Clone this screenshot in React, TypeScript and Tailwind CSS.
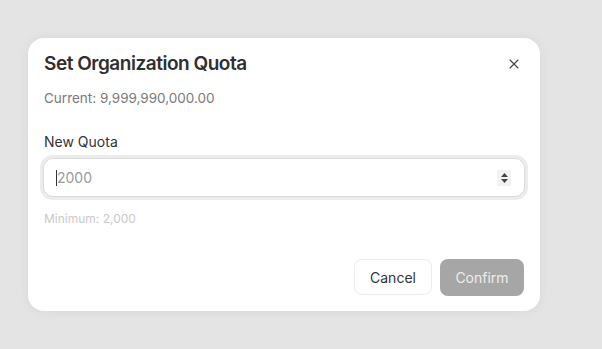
import { X } from 'lucide-react'

function App() {
  return (
    <main
      className="min-h-screen w-full bg-[#e4e4e4] pt-[38px] pl-[28px]"
      style={{ fontFamily: 'Inter, "Noto Sans", sans-serif' }}
    >
      <div className="w-[512px] h-[273px] rounded-[16px] bg-white shadow-[0_0_12px_rgba(0,0,0,0.06)] px-4 pt-[12px] flex flex-col">
        <div className="flex items-center justify-between h-[28px]">
          <h2 className="text-[19px] font-semibold tracking-[-0.025em] text-[#2f2f2f]">Set Organization Quota</h2>
          <button type="button" className="mr-[2px] text-[#444]">
            <X size={16} strokeWidth={1.6} />
          </button>
        </div>
        <p className="mt-[10px] text-[13.5px] leading-5 text-[#7a7a7a]">Current: 9,999,990,000.00</p>
        <label className="mt-[24px] text-[14px] leading-5 text-[#333]">New Quota</label>
        <div className="mt-[6px] -mx-[1px] h-[39px] rounded-[10px] border border-[#d9d9d9] ring-[3px] ring-[#ececec] flex items-center pl-[12px] pr-[13px]">
          <span className="w-px h-[16px] bg-[#333]" />
          <span className="text-[14px] text-[#9a9a9a]">2000</span>
          <span className="ml-auto w-[14px] h-[16px] bg-[#f2f2f2] flex flex-col items-center justify-center gap-[2px]">
            <svg width="7" height="4" viewBox="0 0 7 4"><path d="M3.5 0L7 4H0Z" fill="#444" /></svg>
            <svg width="7" height="4" viewBox="0 0 7 4"><path d="M0 0H7L3.5 4Z" fill="#444" /></svg>
          </span>
        </div>
        <p className="mt-[14px] text-[12px] leading-4 text-[#cacaca]">Minimum: 2,000</p>
        <div className="mt-auto mb-[15px] flex justify-end gap-2">
          <button type="button" className="h-[36px] w-[78px] rounded-[8px] border border-[#ececec] bg-white text-[14px] text-[#333]">
            Cancel
          </button>
          <button type="button" className="h-[37px] w-[84px] rounded-[8px] bg-[#a6a6a6] text-[14px] text-[#ededed]">
            Confirm
          </button>
        </div>
      </div>
    </main>
  )
}

export default App
